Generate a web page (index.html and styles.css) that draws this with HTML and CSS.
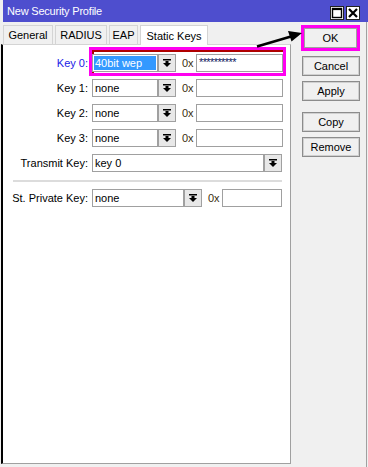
FILE: index.html
```html
<!DOCTYPE html>
<html>
<head>
<meta charset="utf-8">
<link rel="stylesheet" href="styles.css">
</head>
<body>
<div class="titlebar">
  <span class="title">New Security Profile</span>
  <div class="tbtns">
    <span class="tbtn"><svg width="12" height="12" viewBox="0 0 12 12"><rect x="1.5" y="1.5" width="9" height="9" fill="none" stroke="#000" stroke-width="1.4"/><rect x="1.5" y="1.5" width="9" height="1.6" fill="#000"/></svg></span>
    <span class="tbtn"><svg width="12" height="12" viewBox="0 0 12 12"><path d="M2 2 L10 10 M10 2 L2 10" stroke="#000" stroke-width="2.2"/></svg></span>
  </div>
</div>
<div class="main">
  <div class="left">
    <div class="tabs">
      <div class="tab t-general">General</div>
      <div class="tab t-radius">RADIUS</div>
      <div class="tab t-eap">EAP</div>
      <div class="tab t-static active">Static Keys</div>
    </div>
    <div class="panel">
      <div class="row">
        <span class="lbl blue">Key 0:</span>
        <div class="hl">
          <div class="group">
            <div class="sel w66"><span class="selected">40bit wep</span></div>
            <div class="dd"><svg width="8" height="8" viewBox="0 0 8 8"><rect x="0" y="0" width="8" height="1.5" fill="#000"/><rect x="2.5" y="2" width="3" height="2" fill="#000"/><polygon points="0,4 8,4 4,8" fill="#000"/></svg></div>
            <span class="hex">0x</span>
            <div class="inp w87"><span class="stars">**********</span></div>
          </div>
        </div>
      </div>
      <div class="row">
        <span class="lbl">Key 1:</span>
        <div class="group">
          <div class="sel w66">none</div>
          <div class="dd"><svg width="8" height="8" viewBox="0 0 8 8"><rect x="0" y="0" width="8" height="1.5" fill="#000"/><rect x="2.5" y="2" width="3" height="2" fill="#000"/><polygon points="0,4 8,4 4,8" fill="#000"/></svg></div>
          <span class="hex">0x</span>
          <div class="inp w87"></div>
        </div>
      </div>
      <div class="row">
        <span class="lbl">Key 2:</span>
        <div class="group">
          <div class="sel w66">none</div>
          <div class="dd"><svg width="8" height="8" viewBox="0 0 8 8"><rect x="0" y="0" width="8" height="1.5" fill="#000"/><rect x="2.5" y="2" width="3" height="2" fill="#000"/><polygon points="0,4 8,4 4,8" fill="#000"/></svg></div>
          <span class="hex">0x</span>
          <div class="inp w87"></div>
        </div>
      </div>
      <div class="row">
        <span class="lbl">Key 3:</span>
        <div class="group">
          <div class="sel w66">none</div>
          <div class="dd"><svg width="8" height="8" viewBox="0 0 8 8"><rect x="0" y="0" width="8" height="1.5" fill="#000"/><rect x="2.5" y="2" width="3" height="2" fill="#000"/><polygon points="0,4 8,4 4,8" fill="#000"/></svg></div>
          <span class="hex">0x</span>
          <div class="inp w87"></div>
        </div>
      </div>
      <div class="row">
        <span class="lbl">Transmit Key:</span>
        <div class="group">
          <div class="sel w172">key 0</div>
          <div class="dd"><svg width="8" height="8" viewBox="0 0 8 8"><rect x="0" y="0" width="8" height="1.5" fill="#000"/><rect x="2.5" y="2" width="3" height="2" fill="#000"/><polygon points="0,4 8,4 4,8" fill="#000"/></svg></div>
        </div>
      </div>
      <div class="sep"></div>
      <div class="row">
        <span class="lbl">St. Private Key:</span>
        <div class="group">
          <div class="sel w92">none</div>
          <div class="dd"><svg width="8" height="8" viewBox="0 0 8 8"><rect x="0" y="0" width="8" height="1.5" fill="#000"/><rect x="2.5" y="2" width="3" height="2" fill="#000"/><polygon points="0,4 8,4 4,8" fill="#000"/></svg></div>
          <span class="hex">0x</span>
          <div class="inp w60"></div>
        </div>
      </div>
    </div>
  </div>
  <div class="right">
    <div class="btn ok">OK</div>
    <div class="btn">Cancel</div>
    <div class="btn">Apply</div>
    <div class="btn gapped">Copy</div>
    <div class="btn">Remove</div>
  </div>
</div>
<svg class="arrow" width="368" height="467" viewBox="0 0 368 467">
  <line x1="257" y1="46.5" x2="291" y2="36.5" stroke="#000" stroke-width="2.6"/>
  <polygon points="302,33 288,31 291.5,41.5" fill="#000"/>
</svg>
</body>
</html>
```

FILE: styles.css
```css
* { box-sizing: border-box; }
html, body { margin: 0; padding: 0; }
body {
  width: 368px;
  height: 467px;
  background: #f0f0f0;
  font-family: "Liberation Sans", Arial, sans-serif;
  font-size: 11px;
  color: #000;
  position: relative;
  overflow: hidden;
  display: flex;
  flex-direction: column;
}
.titlebar {
  margin-left: 3px;
  height: 22px;
  background: #4e4ece;
  display: flex;
  align-items: center;
  flex: none;
}
.title {
  color: #fff;
  padding-left: 4px;
  font-size: 11px;
  letter-spacing: -0.2px;
}
.tbtns {
  margin-left: auto;
  margin-right: 8px;
  display: flex;
  gap: 2px;
  margin-top: 3px;
}
.tbtn {
  width: 14px;
  height: 14px;
  background: #fff;
  border: 1px solid #222;
  display: flex;
  align-items: center;
  justify-content: center;
}
.main {
  flex: 1;
  display: flex;
  width: 367px;
  border-right: 1px solid #a0a0a0;
  padding-bottom: 3px;
}
.left {
  width: 291px;
  display: flex;
  flex-direction: column;
  padding-top: 3px;
}
.tabs {
  display: flex;
  margin-left: 3px;
  gap: 2px;
  height: 19px;
  flex: none;
}
.tab {
  height: 19px;
  border: 1px solid #d4d4d4;
  border-bottom: none;
  display: flex;
  align-items: center;
  justify-content: center;
  background: #f0f0f0;
}
.t-general { width: 50px; }
.t-radius { width: 52px; }
.t-eap { width: 29px; }
.t-static { width: 68px; }
.tab.active {
  background: #fff;
  height: 20px;
  margin-bottom: -1px;
  position: relative;
  z-index: 1;
}
.panel {
  flex: 1;
  margin-left: 1px;
  background: #fff;
  border-left: 2px solid #000;
  border-right: 1px solid #a0a0a0;
  border-bottom: 1px solid #a0a0a0;
  border-top: 1px solid #d4d4d4;
  padding-top: 9px;
  display: flex;
  flex-direction: column;
  gap: 7px;
}
.row {
  display: flex;
  align-items: center;
  height: 18px;
}
.lbl {
  width: 85px;
  margin-right: 4px;
  text-align: right;
  white-space: nowrap;
}
.lbl.blue { color: #1a1ae6; }
.group {
  display: flex;
  align-items: center;
  height: 18px;
}
.hl {
  margin: -7px -3px -4px -3px;
  border: 3px solid #ff00f0;
  padding: 4px 0 1px 0;
  box-shadow: inset 2px 2px 0 #b00000;
}
.sel, .inp {
  height: 18px;
  border: 1px solid #a0a0a0;
  background: #fff;
  padding-left: 2px;
  display: flex;
  align-items: center;
}
.w66 { width: 66px; }
.w172 { width: 172px; }
.w92 { width: 92px; }
.w87 { width: 87px; }
.w60 { width: 60px; }
.selected {
  background: #3399ff;
  color: #fff;
  flex: 1;
  height: 14px;
  margin-right: 1px;
  line-height: 14px;
  padding-left: 1px;
  margin-left: -1px;
}
.dd {
  width: 18px;
  height: 18px;
  border: 1px solid #a0a0a0;
  background: #e8e8e8;
  display: flex;
  align-items: center;
  justify-content: center;
}
.hex {
  width: 20px;
  padding-left: 6px;
  color: #3a2e10;
}
.stars {
  color: #102060;
  letter-spacing: -0.6px;
  margin-top: -2px;
}
.sep {
  height: 2px;
  background: #dcdcdc;
  margin: 1px 8px 0 10px;
}
.right {
  flex: 1;
  display: flex;
  flex-direction: column;
  padding-top: 3px;
  padding-left: 11px;
  gap: 5px;
}
.btn {
  width: 58px;
  height: 20px;
  border: 1px solid #8c8c8c;
  box-shadow: inset 0 0 0 1px #d0d0d0;
  background: #f0f0f0;
  display: flex;
  align-items: center;
  justify-content: center;
  font-size: 11px;
}
.btn.ok {
  width: 59px;
  height: 26px;
  margin-left: -1px;
  border: 3px solid #ff00f0;
  box-shadow: inset 0 0 0 1px #a0a0a0;
}
.btn.gapped { margin-top: 6px; }
.arrow {
  position: absolute;
  left: 0;
  top: 0;
  pointer-events: none;
}
```
